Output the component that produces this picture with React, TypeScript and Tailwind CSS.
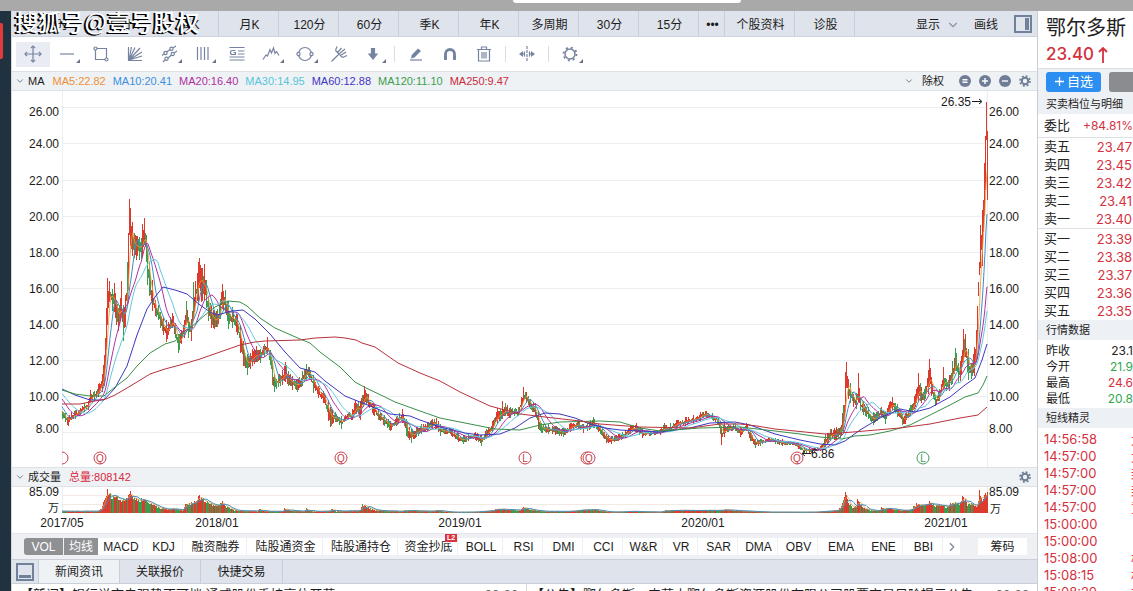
import React from 'react';
import { ChevronDown, ChevronRight } from 'lucide-react';

const RED = '#dc3a2c';
const GREEN = '#3f9b4f';

const periodTabs = [
  { label: '分时', width: 'w-[87px]' },
  { label: '日K', width: 'w-[60px]' },
  { label: '周K', width: 'w-[60px]' },
  { label: '月K', width: 'w-[60px]' },
  { label: '120分', width: 'w-[60px]' },
  { label: '60分', width: 'w-[60px]' },
  { label: '季K', width: 'w-[60px]' },
  { label: '年K', width: 'w-[60px]' },
  { label: '多周期', width: 'w-[60px]' },
  { label: '30分', width: 'w-[60px]' },
  { label: '15分', width: 'w-[60px]' },
  { label: '•••', width: 'w-[26px]' },
  { label: '个股资料', width: 'w-[70px]' },
  { label: '诊股', width: 'w-[60px]' },
];

const averages = [
  { text: 'MA5:22.82', color: 'text-[#ee8f35]' },
  { text: 'MA10:20.41', color: 'text-[#3d8fdc]' },
  { text: 'MA20:16.40', color: 'text-[#b02fa0]' },
  { text: 'MA30:14.95', color: 'text-[#56c5dc]' },
  { text: 'MA60:12.88', color: 'text-[#3f35c4]' },
  { text: 'MA120:11.10', color: 'text-[#3a9e4e]' },
  { text: 'MA250:9.47', color: 'text-[#cc2a3c]' },
];

const indicators = [
  { label: 'MACD', width: 'w-[45px]' },
  { label: 'KDJ', width: 'w-[40px]' },
  { label: '融资融券', width: 'w-[64px]' },
  { label: '陆股通资金', width: 'w-[76px]' },
  { label: '陆股通持仓', width: 'w-[75px]' },
  { label: '资金抄底', width: 'w-[60px]', badge: 'L2' },
  { label: 'BOLL', width: 'w-[45px]' },
  { label: 'RSI', width: 'w-[40px]' },
  { label: 'DMI', width: 'w-[40px]' },
  { label: 'CCI', width: 'w-[40px]' },
  { label: 'W&R', width: 'w-[40px]' },
  { label: 'VR', width: 'w-[35px]' },
  { label: 'SAR', width: 'w-[40px]' },
  { label: 'DMA', width: 'w-[40px]' },
  { label: 'OBV', width: 'w-[40px]' },
  { label: 'EMA', width: 'w-[45px]' },
  { label: 'ENE', width: 'w-[40px]' },
  { label: 'BBI', width: 'w-[40px]' },
];

const sells = [['卖五', '23.47'], ['卖四', '23.45'], ['卖三', '23.42'], ['卖二', '23.41'], ['卖一', '23.40']];
const buys = [['买一', '23.39'], ['买二', '23.38'], ['买三', '23.37'], ['买四', '23.36'], ['买五', '23.35']];

const quotes = [
  { label: '昨收', value: '23.1', color: 'text-[#222]' },
  { label: '今开', value: '21.9', color: 'text-[#2fa44f]' },
  { label: '最高', value: '24.6', color: 'text-[#d5303e]' },
  { label: '最低', value: '20.8', color: 'text-[#2fa44f]' },
];

const ticks = [
  ['14:56:58', '大'], ['14:57:00', '大'], ['14:57:00', '封'], ['14:57:00', '封'], ['14:57:00', '竞'],
  ['15:00:00', ''], ['15:00:00', ''], ['15:08:00', '机'], ['15:08:15', '机'], ['15:08:20', '机'],
];

// [x, top of range, bottom of range]
const range = [
  [30, 372, 384], [48, 385, 396], [58, 402, 412],
  [62, 411, 419], [65, 413, 422], [68, 417, 426], [71, 412, 420], [75, 410, 419], [80, 408, 415], [84, 403, 412],
  [88, 401, 410], [90, 390, 403], [94, 391, 401], [98, 384, 397], [102, 374, 392], [104, 355, 386], [105, 338, 368],
  [106, 308, 350], [107, 278, 325], [109, 281, 302], [112, 289, 311], [114, 283, 312], [116, 300, 325], [118, 308, 331],
  [120, 298, 321], [121, 281, 315], [123, 305, 341], [125, 295, 327], [127, 262, 303], [128, 233, 290], [129, 199, 235],
  [130, 208, 246], [132, 222, 256], [134, 233, 258], [136, 236, 260], [139, 237, 260], [141, 238, 259], [142, 224, 257],
  [144, 218, 245], [146, 235, 262], [147, 250, 285], [149, 262, 296], [152, 280, 311], [155, 300, 316], [158, 305, 320],
  [160, 312, 328], [163, 318, 335], [166, 320, 342], [170, 317, 329], [172, 313, 328], [175, 323, 338], [178, 334, 353],
  [181, 330, 344], [184, 320, 338], [186, 301, 325], [188, 317, 338], [191, 319, 341], [193, 282, 320], [195, 281, 306],
  [198, 262, 302], [199, 258, 288], [201, 268, 302], [204, 264, 300], [206, 280, 308], [208, 298, 321], [211, 305, 328],
  [214, 311, 329], [217, 309, 327], [220, 299, 319], [222, 284, 309], [225, 290, 313], [228, 301, 329], [232, 307, 328],
  [237, 314, 335], [240, 325, 353], [243, 341, 366], [247, 354, 375], [252, 349, 366], [256, 346, 362], [260, 349, 363],
  [264, 344, 357], [267, 337, 353], [270, 350, 365], [272, 360, 385], [274, 374, 392], [278, 374, 387], [282, 370, 385],
  [285, 362, 382], [288, 371, 386], [292, 376, 390], [297, 379, 392], [302, 371, 386], [306, 364, 379], [309, 367, 379],
  [313, 375, 393], [318, 386, 398], [323, 391, 403], [328, 400, 421], [330, 407, 427], [335, 412, 422], [341, 416, 429],
  [345, 415, 421], [352, 409, 420], [355, 400, 413], [360, 401, 420], [364, 386, 404], [368, 394, 407], [373, 403, 415],
  [378, 409, 420], [384, 415, 426], [390, 421, 431], [396, 417, 426], [402, 409, 423], [406, 419, 436], [411, 429, 443],
  [416, 427, 437], [421, 424, 434], [427, 422, 431], [432, 419, 429], [436, 418, 429], [440, 424, 436], [446, 427, 434],
  [452, 429, 437], [458, 433, 442], [463, 435, 444], [468, 434, 441], [475, 432, 440], [481, 435, 446], [486, 429, 439],
  [492, 421, 431], [497, 408, 424], [500, 409, 421], [502, 401, 419], [510, 407, 418], [518, 407, 416], [521, 397, 410],
  [523, 387, 402], [526, 392, 403], [530, 399, 409], [535, 403, 416], [538, 411, 429], [541, 423, 433], [548, 424, 434],
  [555, 426, 435], [563, 428, 437], [570, 423, 432], [578, 420, 428], [583, 424, 433], [587, 423, 431], [593, 417, 428],
  [600, 425, 434], [606, 434, 443], [611, 436, 444], [618, 434, 441], [625, 430, 438], [630, 425, 434], [636, 423, 432],
  [642, 429, 438], [650, 431, 436], [660, 429, 435], [664, 423, 432], [670, 423, 432], [676, 420, 428], [685, 417, 426],
  [693, 415, 424], [700, 412, 421], [706, 411, 418], [712, 413, 420], [718, 417, 425], [721, 426, 445], [724, 423, 437],
  [728, 425, 432], [735, 423, 431], [740, 427, 437], [746, 423, 431], [750, 430, 441], [755, 439, 448], [760, 439, 446],
  [768, 437, 442], [775, 438, 444], [782, 439, 446], [790, 441, 445], [798, 443, 449], [804, 448, 453], [812, 448, 453],
  [820, 446, 451], [825, 434, 447], [830, 429, 441], [836, 427, 440], [840, 427, 438], [843, 405, 432], [845, 372, 412],
  [846, 362, 388], [848, 379, 399], [850, 383, 403], [853, 394, 407], [856, 393, 409], [858, 373, 402], [860, 397, 411],
  [863, 402, 415], [868, 407, 419], [873, 412, 425], [877, 412, 421], [881, 407, 417], [885, 412, 424], [889, 402, 413],
  [892, 397, 410], [897, 404, 417], [902, 414, 425], [905, 413, 424], [910, 405, 416], [914, 396, 409], [918, 373, 402],
  [921, 387, 403], [924, 389, 401], [928, 370, 394], [929, 359, 387], [931, 377, 396], [935, 395, 406], [939, 389, 401],
  [943, 367, 389], [946, 379, 391], [949, 375, 391], [952, 361, 384], [955, 348, 371], [958, 363, 383], [960, 361, 381],
  [963, 329, 362], [965, 334, 357], [968, 349, 380], [971, 364, 379], [974, 347, 376], [976, 330, 360], [977, 306, 342],
  [978, 282, 296], [979, 262, 275], [980, 225, 268], [982, 210, 266], [983, 200, 232], [984, 163, 216], [985, 136, 190],
  [986, 102, 140], [987, 131, 200],
];

const volume = [
  [62, 2], [97, 2], [101, 5], [104, 14], [107, 25], [110, 20], [115, 20], [120, 15], [125, 17], [129, 23], [133, 18],
  [138, 15], [143, 16], [150, 11], [156, 8], [165, 4], [172, 5], [182, 3], [185, 12], [190, 10], [195, 15], [199, 19],
  [205, 14], [210, 11], [216, 9], [222, 12], [226, 7], [235, 3], [257, 2], [259, 5], [262, 2], [283, 2], [284, 6],
  [287, 3], [304, 2], [306, 5], [309, 2], [329, 2], [331, 5], [335, 2], [360, 3], [362, 10], [368, 6], [375, 3],
  [400, 2], [406, 3], [430, 2], [436, 3], [450, 1], [470, 1], [494, 3], [496, 5], [520, 3], [522, 7], [530, 4],
  [540, 2], [570, 2], [588, 4], [594, 4], [604, 2], [610, 1], [630, 2], [660, 1], [664, 3], [680, 3], [720, 3],
  [724, 4], [750, 2], [770, 1], [812, 1], [824, 2], [838, 3], [843, 14], [845, 23], [848, 12], [852, 7], [856, 8],
  [857, 17], [862, 6], [870, 3], [880, 3], [881, 7], [884, 4], [888, 6], [900, 3], [910, 4], [914, 8], [918, 12],
  [922, 8], [928, 10], [929, 16], [934, 8], [940, 9], [948, 7], [952, 13], [955, 11], [959, 10], [963, 20], [967, 9],
  [972, 10], [977, 7], [979, 26], [982, 12], [985, 25], [987, 26],
];

const ma60 = '62,389 75,395 90,400 104,400 115,388 127,366 137,335 147,309 155,297 163,287 175,290 187,294 200,305 210,312 217,315 232,311 243,310 255,319 270,334 285,352 300,368 315,372 325,381 345,396 355,400 375,408 390,414 410,416 420,420 440,427 465,433 480,435 500,434 515,428 530,418 545,413 560,414 575,418 590,424 605,428 620,430 660,432 690,428 710,423 735,422 750,425 775,434 800,440 820,444 835,445 845,441 860,430 880,418 900,409 915,412 930,408 950,397 965,385 975,378 982,360 987,344';
const ma120 = '62,390 75,394 90,396 104,396 115,387 127,378 137,366 150,353 165,344 175,341 190,328 205,315 215,307 228,301 240,302 247,306 260,318 275,328 300,339 310,343 320,352 340,367 355,382 366,388 385,397 395,402 420,411 440,418 470,424 495,429 520,430 540,425 560,422 600,421 620,422 640,428 660,431 700,428 740,427 775,431 800,434 820,437 842,439 855,436 870,435 890,431 910,425 930,415 950,405 965,397 978,393 983,385 987,376';
const ma250 = '62,404 80,404 95,401 106,399 115,395 127,388 137,382 150,374 165,369 180,365 200,359 220,352 240,345 255,342 265,341 300,340 315,338 335,337 345,338 356,340 362,343 375,347 385,354 398,363 420,373 440,381 460,392 475,399 490,406 505,410 520,414 545,417 580,421 600,424 640,427 690,428 720,424 740,424 757,426 775,429 805,432 825,434 853,432 900,428 930,424 960,418 978,415 987,407';

let seed = 7;
function random() {
  seed = (seed * 16807) % 2147483647;
  return seed / 2147483647;
}

function at(points: number[][], x: number, column: number) {
  const i = Math.max(1, points.findIndex((p) => p[0] >= x));
  const a = points[i - 1];
  const b = points[i];
  return a[column] + ((b[column] - a[column]) * (x - a[0])) / (b[0] - a[0]);
}

const candles: { x: number; high: number; low: number; up: boolean; close: number }[] = [];
for (let x = 30; x <= 987; x++) {
  const top = at(range, x, 1);
  const bottom = at(range, x, 2);
  const key = range.some((p) => p[0] === x);
  const size = bottom - top;
  const high = key ? top : top + random() * size * 0.5;
  const low = key ? bottom : bottom - random() * size * 0.4;
  const rising = x > 34 && at(range, x - 3, 1) > top;
  const rally = x > 975 && x !== 986;
  candles.push({ x, high, low, up: random() < (rising ? 0.78 : 0.46) || rally, close: (high + low) / 2 });
}

function average(values: { x: number; v: number }[], days: number) {
  return values
    .map((p, i) => {
      const part = values.slice(Math.max(0, i - days + 1), i + 1);
      return { x: p.x, y: part.reduce((sum, q) => sum + q.v, 0) / part.length };
    })
    .filter((p) => p.x >= 62)
    .map((p) => `${p.x},${p.y.toFixed(1)}`)
    .join(' ');
}

const closes = candles.map((c) => ({ x: c.x, v: c.close }));
const visible = candles.filter((c) => c.x >= 62);
const bars = visible.map((c) => ({ x: c.x, up: c.up, h: at(volume, c.x, 1) * (0.7 + random() * 0.3) }));
const barTops = bars.map((b) => ({ x: b.x, v: 513 - b.h }));

const scale = [
  { label: '26.00', line: 107, text: 116 },
  { label: '24.00', line: 143, text: 148 },
  { label: '22.00', line: 180, text: 185 },
  { label: '20.00', line: 216, text: 221 },
  { label: '18.00', line: 252, text: 257 },
  { label: '16.00', line: 288, text: 293 },
  { label: '14.00', line: 324, text: 329 },
  { label: '12.00', line: 360, text: 365 },
  { label: '10.00', line: 396, text: 401 },
  { label: '8.00', line: 432, text: 433 },
];

function Marker({ x, letter, color = '#c8414b' }: { x: number; letter: string; color?: string }) {
  return (
    <g>
      <circle cx={x} cy={458} r={6} fill="#fff" stroke={color} />
      <text x={x} y={462} fontSize={10} textAnchor="middle" fill={color}>{letter}</text>
    </g>
  );
}

function PriceChart() {
  return (
    <svg viewBox="12 91 1025 376" className="block h-auto w-full" fontSize={12} fill="#1c1c1c">
      <g stroke="#eceff1" shapeRendering="crispEdges">
        {scale.map((s) => (
          <line key={s.label} x1={62} x2={988} y1={s.line + 0.5} y2={s.line + 0.5} />
        ))}
        <line x1={62.5} x2={62.5} y1={91} y2={467} />
        <line x1={987.5} x2={987.5} y1={91} y2={467} />
      </g>
      {scale.map((s) => (
        <g key={s.label}>
          <text x={59} y={s.text} textAnchor="end">{s.label}</text>
          <text x={989} y={s.text}>{s.label}</text>
        </g>
      ))}
      <g shapeRendering="crispEdges">
        {visible.map((c) => (
          <rect key={c.x} x={c.x - 0.5} y={c.high} width={1.2} height={Math.max(1, c.low - c.high)} fill={c.up ? RED : GREEN} />
        ))}
      </g>
      <g fill="none" strokeWidth={1}>
        <polyline points={average(closes, 5)} stroke="#ee9a3a" strokeOpacity={0.85} />
        <polyline points={average(closes, 10)} stroke="#3a8fc8" />
        <polyline points={average(closes, 20)} stroke="#b02fa0" />
        <polyline points={average(closes, 30)} stroke="#5fc8dc" />
        <polyline points={ma60} stroke="#3d38c0" />
        <polyline points={ma120} stroke="#3a8f48" />
        <polyline points={ma250} stroke="#b8323c" />
      </g>
      <path d="M62 452a6 6 0 0 1 0 12" fill="none" stroke="#c8414b" />
      <Marker x={100} letter="Q" />
      <Marker x={341} letter="Q" />
      <Marker x={525} letter="L" />
      <Marker x={587} letter="" />
      <Marker x={589} letter="Q" />
      <Marker x={797} letter="Q" />
      <Marker x={923} letter="L" color="#3f9b5f" />
      <text x={941} y={106}>26.35</text>
      <path d="M972 101.500h9M979 99l3 2.500-3 2.500" fill="none" stroke="#1c1c1c" />
      <text x={811} y={458}>6.86</text>
      <path d="M802 453.500h9M805 451l-3 2.500 3 2.500" fill="none" stroke="#1c1c1c" />
    </svg>
  );
}

function VolumeChart() {
  return (
    <svg viewBox="12 487 1025 46" className="block h-auto w-full" fontSize={12} fill="#1c1c1c">
      <path d="M62 495.500H988M62 504.500H988" stroke="#f2e9e4" />
      <path d="M62.500 487V513M987.500 487V513" stroke="#e9ecef" />
      <g shapeRendering="crispEdges">
        {bars.map((b) => (
          <rect key={b.x} x={b.x - 0.5} y={513 - b.h} width={1.2} height={b.h} fill={b.up ? RED : GREEN} />
        ))}
      </g>
      <polyline points={average(barTops, 5)} fill="none" stroke="#d9a850" strokeWidth={0.8} />
      <polyline points={average(barTops, 10)} fill="none" stroke="#4b8fc0" />
      <text x={59} y={496} textAnchor="end">85.09</text>
      <text x={59} y={512} fontSize={11} textAnchor="end">万</text>
      <text x={989} y={496}>85.09</text>
      <text x={990} y={513} fontSize={11}>万</text>
      <text x={62} y={527} textAnchor="middle">2017/05</text>
      <text x={217} y={527} textAnchor="middle">2018/01</text>
      <text x={460} y={527} textAnchor="middle">2019/01</text>
      <text x={703} y={527} textAnchor="middle">2020/01</text>
      <text x={946} y={527} textAnchor="middle">2021/01</text>
    </svg>
  );
}

const tools = [
  { name: '移动', more: false, art: <><path d="M9 1v16M1 9h16" /><path d="M7 3l2-2 2 2M7 15l2 2 2-2M3 7L1 9l2 2M15 7l2 2-2 2" /></> },
  { name: '直线', more: true, art: <path d="M2 9h14" /> },
  { name: '矩形', more: false, art: <><path d="M5 3.500h9.500V13M3.500 5v9.500H13" /><circle cx="3.500" cy="3.500" r="1.500" /><circle cx="14.500" cy="14.500" r="1.500" /></> },
  { name: '扇形线', more: false, art: <path d="M2.500 2v13.500H16M3 15L5.500 2M3 15L9 2.500M3 15L14 3M3 15L16 7M3 15l13-4" /> },
  { name: '通道', more: true, art: <><path d="M2 10.500L10 4.500M13 3l3-2M3 17l2-2M8 13l3.500-3M14 8l3-2" /><circle cx="5.500" cy="8" r="1.600" fill="#fff" /><circle cx="11.500" cy="3.700" r="1.600" fill="#fff" /><circle cx="6.500" cy="13.800" r="1.600" /><circle cx="12.700" cy="9" r="1.600" /></> },
  { name: '周期线', more: true, art: <path d="M3.500 2v13M7 2v13M10.500 2v13M14 2v13" /> },
  { name: '分割线', more: false, art: <path d="M1.500 2.500h15M10 6h6.500M10 9h6.500M1.500 12h15M1.500 15h15M7.500 5.500H4.500q-2 0-2 2t2 2h3V7.500H5.500" /> },
  { name: '波浪线', more: true, art: <path d="M1 14.500l3-4.500 1.500 1 2.500-6.500 1.500 3.500 2-5 1.500 5.500 1.500-2 2.500 4" /> },
  { name: '圆形', more: true, art: <><circle cx="9" cy="9" r="6.500" /><circle cx="2.500" cy="9" r="1.600" fill="#fff" /><circle cx="15.500" cy="9" r="1.600" fill="#fff" /></> },
  { name: '音叉线', more: false, art: <path d="M1.500 16.500L9 9M5.500 5.500l7 7M5.500 5.500L7 1.500M7.500 7.500L11.500 3M9 9l6-5M10.500 10.500L16 7M12.500 12.500l4.500-2" /> },
  { name: '箭头', more: true, art: <path d="M7.500 3.500h3V9H13l-4 5-4-5h2.500z" fill="currentColor" /> },
];

const editTools = [
  { name: '橡皮', art: <><path d="M4 13.500l.7-3.500L11 3.500l3 2.500-6.500 6.500z" fill="currentColor" stroke="none" /><path d="M3 15h12" /></> },
  { name: '磁铁', art: <path d="M4.500 15V9a4.500 4.500 0 0 1 9 0v6M3 12.500h3M12 12.500h3" strokeWidth={2.800} /> },
  { name: '删除', art: <path d="M2 4.500h14M6.500 4V2h5v2M3.500 4.500v11.500h11V4.500M7 7v6.500M9 7v6.500M11 7v6.500" /> },
];

function ToolButton({ name, more, active, children }: { name: string; more?: boolean; active?: boolean; children: React.ReactNode }) {
  return (
    <button aria-label={name} className={`relative flex h-[25px] w-[34px] items-center justify-center text-[#7683a0] ${active ? 'bg-[#e9ecf2]' : ''}`}>
      <svg width="18" height="18" viewBox="0 0 18 18" fill="none" stroke="currentColor" strokeWidth={1.2}>{children}</svg>
      {more && (
        <svg width="4" height="4" className="absolute right-1 bottom-1" fill="#6a7487"><path d="M4 0v4H0z" /></svg>
      )}
    </button>
  );
}

function Gear({ label }: { label: string }) {
  return (
    <button aria-label={label} className="text-[#6f7d96]">
      <svg width="12" height="12" viewBox="0 0 12 12" fill="none" stroke="currentColor">
        <circle cx="6" cy="6" r="3.200" strokeWidth={2} />
        <circle cx="6" cy="6" r="5" strokeWidth={1.600} strokeDasharray="2 1.930" />
      </svg>
    </button>
  );
}

function RoundButton({ label, d }: { label: string; d: string }) {
  return (
    <button aria-label={label}>
      <svg width="12" height="12" viewBox="0 0 12 12" fill="none">
        <circle cx="6" cy="6" r="6" fill="#6f7d96" />
        <path d={d} stroke="#fff" strokeWidth={1.400} />
      </svg>
    </button>
  );
}

function SectionTitle({ children }: { children: React.ReactNode }) {
  return <h2 className="flex h-5 items-center bg-[#edf0f4] pl-2 text-[11px] whitespace-nowrap text-[#222]">{children}</h2>;
}

function OrderRows({ rows }: { rows: string[][] }) {
  return (
    <table className="w-full">
      <tbody>
        {rows.map(([label, price]) => (
          <tr key={label} className="h-[18px] text-[13px] leading-[18px]">
            <th className="p-0 pl-1.5 text-left font-normal">{label}</th>
            <td className="p-0 pr-px text-right font-['Inter','Noto_Sans_CJK_SC',sans-serif] text-[#d5303e]">{price}</td>
          </tr>
        ))}
      </tbody>
    </table>
  );
}

function QuotePanel() {
  return (
    <aside className="w-24 shrink-0 overflow-hidden border-l border-[#c9ced6] bg-white text-[#222]">
      <h1 className="pt-1 pl-2 text-[20px] leading-[26px] whitespace-nowrap">鄂尔多斯</h1>
      <div className="flex h-[27px] items-center gap-1 pl-2 font-['Inter',sans-serif] text-[17px] font-medium text-[#d5303e]">
        23.40
        <svg width="10" height="17" viewBox="0 0 10 17" fill="none" stroke="currentColor" strokeWidth={1.800}><path d="M5 17V2M1 6l4-4 4 4" /></svg>
      </div>
      <div className="flex h-[26px] items-center gap-2 border-t border-[#dde1e6] bg-[#edf0f4] pl-2">
        <button className="flex h-5 w-[55px] shrink-0 items-center justify-center gap-0.5 rounded-[3px] bg-[#2c8ef0] text-[13px] text-white">
          <svg width="11" height="11" viewBox="0 0 11 11" stroke="currentColor" strokeWidth={1.300}><path d="M5.500 1v9M1 5.500h9" /></svg>
          自选
        </button>
        <button aria-label="更多" className="h-5 w-12 shrink-0 rounded-[3px] bg-[#8a8c8f]" />
      </div>
      <SectionTitle>买卖档位与明细</SectionTitle>
      <div className="flex h-6 items-center justify-between border-b border-[#dde1e6] pl-1.5 text-[13px] whitespace-nowrap">
        委比
        <span className="font-['Inter',sans-serif] text-[12px] text-[#d5303e]">+84.81%</span>
      </div>
      <OrderRows rows={sells} />
      <div className="border-t border-[#dde1e6] pt-px">
        <OrderRows rows={buys} />
      </div>
      <SectionTitle>行情数据</SectionTitle>
      <dl className="pt-[3px] pb-px">
        {quotes.map((q) => (
          <div key={q.label} className="flex h-4 items-center justify-between pl-2 text-[12px]">
            <dt>{q.label}</dt>
            <dd className={`font-['Inter',sans-serif] ${q.color}`}>{q.value}</dd>
          </div>
        ))}
      </dl>
      <SectionTitle>短线精灵</SectionTitle>
      <ul className="pt-[3px] font-['Inter','Noto_Sans_CJK_SC',sans-serif] text-[13px] text-[#d5303e]">
        {ticks.map(([time, note], i) => (
          <li key={i} className="flex h-[17px] items-center whitespace-nowrap">
            <span className="w-[93px] shrink-0 pl-1.5">{time}</span>
            <span>{note}</span>
          </li>
        ))}
      </ul>
    </aside>
  );
}

export default function App() {
  return (
    <div className="flex h-screen flex-col overflow-hidden bg-white font-['Liberation_Sans','Noto_Sans_CJK_SC',sans-serif] text-[12px] text-[#1c1c1c]">
      <div className="h-[11px] shrink-0 bg-[#a9a9a9]">
        <div className="mx-auto h-[3px] w-[228px] translate-x-[60px] rounded-b-[3px] bg-white" />
      </div>
      <div className="flex min-h-0 flex-1">
        <div className="w-3 shrink-0 border-r border-[#d5d9df] bg-[#203240] pt-3">
          <div className="h-9 w-[3px] rounded-r-[2px] bg-[#e23b3b]" />
        </div>

        <main className="min-w-0 flex-1 overflow-hidden">
          <header className="relative flex h-[26px] border-b border-[#cdd3dc] bg-[#dfe3eb] whitespace-nowrap">
            {periodTabs.map((tab) => (
              <button key={tab.label} className={`${tab.width} shrink-0 border-r border-[#c8cfd9] pt-0.5 pl-0.5`}>{tab.label}</button>
            ))}
            <div className="ml-auto flex items-center pr-[5px]">
              <button className="flex items-center gap-1.5 pt-0.5">显示<ChevronDown size={14} color="#8a94a5" /></button>
              <button className="ml-3.5 pt-0.5">画线</button>
              <button aria-label="侧栏" className="ml-4">
                <svg width="18" height="18" viewBox="0 0 18 18" fill="none" stroke="#71809b">
                  <rect x="1" y="1" width="16" height="16" strokeWidth={2} />
                  <path d="M13 3v12" strokeWidth={4} />
                </svg>
              </button>
            </div>
            <div className="absolute top-[-4px] left-[3px] text-[23px] leading-[32px] font-medium text-white [text-shadow:-1px_1px_0_#000,-2px_1px_0_#000]">
              搜狐号@壹号股权
            </div>
          </header>

          <div className="flex h-[34px] items-center pl-1">
            {tools.map((tool, i) => (
              <ToolButton key={tool.name} name={tool.name} more={tool.more} active={i === 0}>{tool.art}</ToolButton>
            ))}
            <span className="mx-1 h-4 w-px bg-[#d8dce3]" />
            {editTools.map((tool) => (
              <ToolButton key={tool.name} name={tool.name}>{tool.art}</ToolButton>
            ))}
            <span className="mx-1 h-4 w-px bg-[#d8dce3]" />
            <ToolButton name="平移">
              <path d="M9 1v16" strokeDasharray="3 1" />
              <path d="M1 9l4-3v6zM17 9l-4-3v6z" fill="currentColor" stroke="none" />
              <path d="M4 9h3M11 9h3M6.500 6.500v5M11.500 6.500v5" />
            </ToolButton>
            <span className="mx-1 h-4 w-px bg-[#d8dce3]" />
            <ToolButton name="设置" more>
              <circle cx="9" cy="9" r="5" strokeWidth={1.500} />
              <circle cx="9" cy="9" r="6.500" strokeWidth={1.800} strokeDasharray="2 3.105" />
            </ToolButton>
          </div>

          <div className="flex h-5 items-center gap-[7px] border-y border-[#dde1e6] bg-[#eff2f5] pr-1.5 pl-[3px] text-[11px] whitespace-nowrap">
            <button className="mr-px flex items-center gap-[3px]"><ChevronDown size={10} color="#5f6b80" />MA</button>
            {averages.map((a) => (
              <span key={a.text} className={a.color}>{a.text}</span>
            ))}
            <button className="mr-2 ml-auto flex items-center gap-2"><ChevronDown size={10} color="#5f6b80" />除权</button>
            <div className="flex gap-2">
              <RoundButton label="还原" d="M3.500 4.800h5M3.500 7.300h5" />
              <RoundButton label="放大" d="M3 6h6M6 3v6" />
              <RoundButton label="缩小" d="M3 6h6" />
              <Gear label="均线设置" />
            </div>
          </div>

          <PriceChart />

          <div className="flex h-5 items-center gap-2 border-y border-[#dde1e6] bg-[#eff2f5] pr-1.5 pl-[3px] text-[11px]">
            <button className="flex items-center gap-[3px]"><ChevronDown size={10} color="#5f6b80" />成交量</button>
            <span className="mr-auto text-[#d8283c]">总量:808142</span>
            <Gear label="成交量设置" />
          </div>

          <VolumeChart />

          <nav className="flex h-[26px] items-center border-t border-[#e3e6ea] bg-[#eef0f3] pl-3 whitespace-nowrap">
            <button className="h-[17px] w-[39px] shrink-0 rounded-l-[3px] bg-[#8e9093] text-white">VOL</button>
            <button className="ml-px h-[17px] w-[34px] shrink-0 bg-[#8e9093] text-white">均线</button>
            {indicators.map((item) => (
              <button key={item.label} className={`${item.width} relative h-[17px] shrink-0 border-r border-[#eceef1] bg-white pl-0.5`}>
                {item.label}
                {item.badge && (
                  <span className="absolute -top-1 right-0 h-2 w-3 bg-[#dc3340] text-[7px] leading-[8px] font-bold text-white">{item.badge}</span>
                )}
              </button>
            ))}
            <button aria-label="更多指标" className="flex h-[17px] w-[17px] shrink-0 items-center justify-center bg-white">
              <ChevronRight size={14} color="#7f8896" />
            </button>
            <button className="mr-2.5 ml-auto h-[17px] w-[49px] bg-white">筹码</button>
          </nav>

          <div className="flex h-[25px] border-y border-[#c8cfd9] bg-[#dfe3eb] whitespace-nowrap">
            <button aria-label="收起" className="flex w-[27px] items-center justify-center border-r border-[#c8cfd9]">
              <svg width="18" height="18" viewBox="0 0 18 18" fill="none" stroke="#71809b">
                <rect x="1" y="1" width="16" height="16" strokeWidth={2} />
                <path d="M3 13.500h12" strokeWidth={3} />
              </svg>
            </button>
            <button className="w-[80px] bg-[#eff2f5]">新闻资讯</button>
            <button className="w-[82px] border-x border-[#c8cfd9]">关联报价</button>
            <button className="w-[82px] border-r border-[#c8cfd9]">快捷交易</button>
          </div>

          <div className="flex text-[13px] leading-[22px] whitespace-nowrap">
            <a href="#news" className="flex flex-1 justify-between border-r border-[#d5d9df] pr-2 pl-2">
              【新闻】银行说市走强势不可挡:通威股份季持高位开幕
              <span className="text-[#666]">02-26</span>
            </a>
            <a href="#notice" className="flex flex-1 justify-between pr-2 pl-1">
              【公告】鄂尔多斯：内蒙古鄂尔多斯资源股份有限公司股票交易风险提示公告
              <span className="text-[#666]">02-26</span>
            </a>
          </div>
        </main>

        <QuotePanel />
      </div>
    </div>
  );
}
